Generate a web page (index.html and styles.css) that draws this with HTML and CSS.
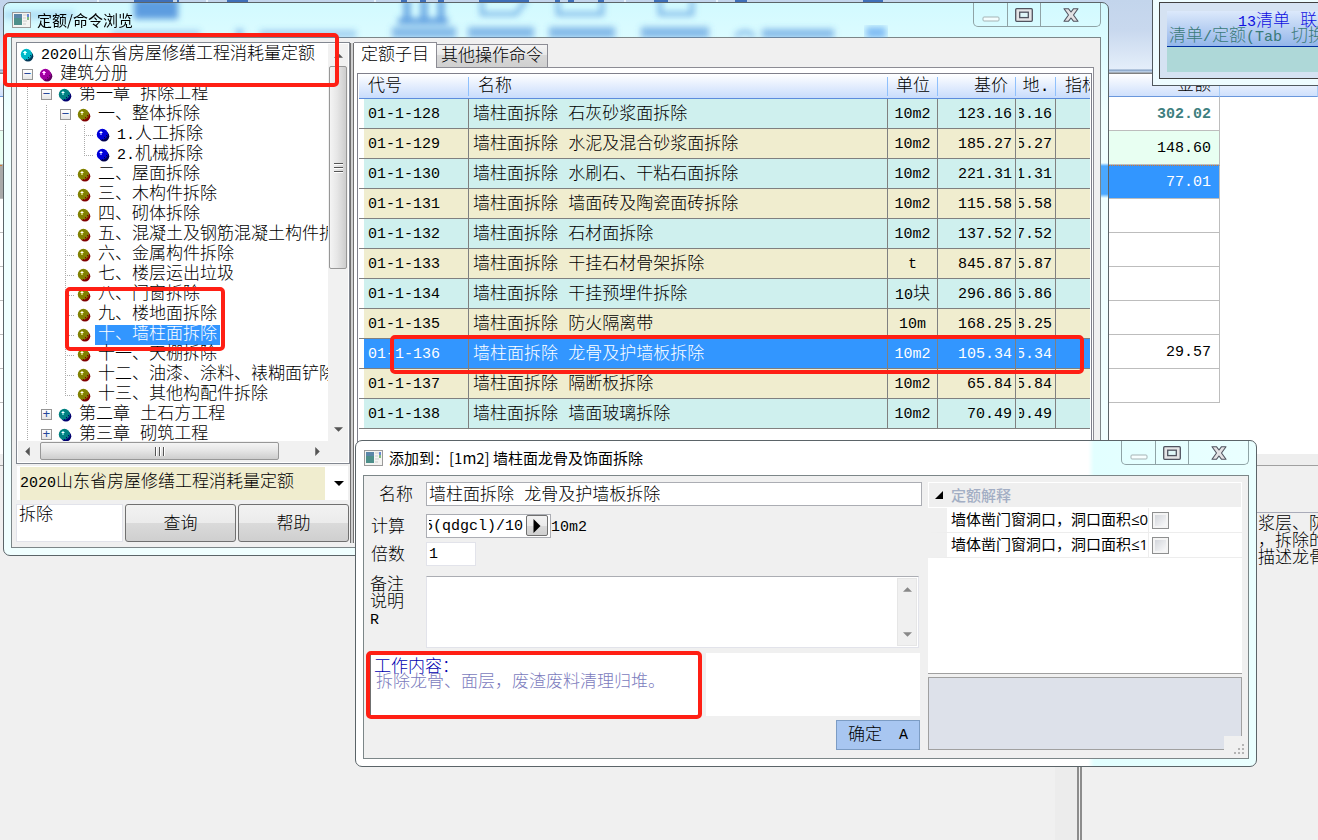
FILE: index.html
```html
<!DOCTYPE html>
<html lang="zh-CN">
<head>
<meta charset="utf-8">
<title>定额/命令浏览</title>
<link rel="stylesheet" href="styles.css">
</head>
<body>
<svg class="defs" aria-hidden="true">
  <symbol id="ball" viewBox="0 0 14 14">
    <circle cx="8" cy="8.2" r="5.3" fill="var(--shade)"/>
    <circle cx="6.4" cy="6.4" r="5.6" fill="currentColor"/>
    <path d="M12 7.5a5.6 5.6 0 0 1-4.8 4.7l1.5-1.7 1.6-.3.4-1.6z" fill="var(--shade)"/>
    <path d="M8 9h1v1H8zM10 7h1v1h-1zM6 11h1v1H6z" fill="var(--shade)"/>
    <path d="M3 4h4v1H3zM4 3h2v4H4z" fill="var(--glow)"/>
    <path d="M4 4h2v1H4z" fill="#fff"/>
  </symbol>
  <symbol id="app" viewBox="0 0 19 16">
    <rect x=".5" y=".5" width="18" height="15" fill="#f4f4f2" stroke="#9a9a9a"/>
    <rect x="2" y="2" width="8" height="11" fill="#4d8f8a"/>
    <rect x="2" y="2" width="8" height="4" fill="#5a86a8"/>
    <path d="M11 3h4M11 6h3M11 9h4M11 12h3" stroke="#ccc"/>
    <path d="M16 2v3" stroke="#3867c8" stroke-width="1.5"/>
    <path d="M16 5v3" stroke="#5aa85a" stroke-width="1.5"/>
  </symbol>
  <symbol id="min" viewBox="0 0 18 6"><rect x="1" y="1" width="16" height="4" rx="1" fill="#fff" fill-opacity=".7" stroke="#a5b3b5"/></symbol>
  <symbol id="max" viewBox="0 0 18 14">
    <rect x=".7" y=".7" width="16.6" height="12.6" rx="1" fill="#e4e4e6" stroke="#50535f" stroke-width="1.3"/>
    <rect x="4.7" y="4.2" width="8.6" height="5.4" fill="#dff6f8" stroke="#50535f" stroke-width="1.3"/>
  </symbol>
  <symbol id="close" viewBox="0 0 16 14">
    <path d="M1 .7h4.4L8 4l2.600-3.300H15L10.500 7 15 13.300h-4.400L8 10l-2.600 3.300H1L5.500 7z" fill="#e2e2e4" stroke="#50535f" stroke-width="1.1" stroke-linejoin="round"/>
  </symbol>
  <symbol id="up" viewBox="0 0 10 5"><path d="M0 5 5 0l5 5z" fill="currentColor"/></symbol>
  <symbol id="down" viewBox="0 0 10 5"><path d="M0 0h10L5 5z" fill="currentColor"/></symbol>
  <symbol id="left" viewBox="0 0 5 10"><path d="M5 0v10L0 5z" fill="currentColor"/></symbol>
  <symbol id="right" viewBox="0 0 5 10"><path d="M0 0v10l5-5z" fill="currentColor"/></symbol>
</svg>

<div class="desktop">
  <main class="back">
    <div class="ribbon">
      <svg width="1318" height="3" aria-hidden="true">
        <g fill="#3f6fb8"><rect x="134" width="39" height="2"/><rect x="177" width="2" height="3"/><rect x="227" width="21" height="2"/><rect x="401" width="6" height="3"/><rect x="420" width="6" height="3"/><rect x="438" width="6" height="3"/><rect x="479" width="50" height="2"/><rect x="555" width="5" height="3"/><rect x="568" width="6" height="3"/><rect x="598" width="6" height="3"/><rect x="654" width="14" height="2"/><rect x="735" width="12" height="2"/><rect x="863" width="20" height="2"/></g>
        <g fill="#e8f2fb"><rect x="97" width="2" height="3"/><rect x="206" width="2" height="3"/><rect x="374" width="2" height="3"/><rect x="624" width="2" height="3"/><rect x="716" width="2" height="3"/></g>
      </svg>
    </div>
    <table class="sum">
      <thead><tr><th class="amt">金额</th><th></th></tr></thead>
      <tbody>
        <tr><td class="total">302.02</td></tr>
        <tr><td class="mint">148.60</td></tr>
        <tr class="on"><td>77.01</td></tr>
        <tr><td></td></tr><tr><td></td></tr><tr><td></td></tr><tr><td></td></tr>
        <tr><td>29.57</td></tr>
        <tr><td></td></tr>
      </tbody>
    </table>
    <div class="lower">
      <div class="split"></div>
      <div class="note"><p>浆层、防</p><p>，拆除的</p><p>描述龙骨</p></div>
    </div>
  </main>

  <aside class="float">
    <div class="float-in">
      <div class="float-head"><p class="f1"><span class="n">13</span>清单 联系</p><p class="f2">清单<span class="n">/</span>定额<span class="n">(Tab </span>切换</p></div>
      <div class="float-body"></div>
    </div>
  </aside>

  <section class="win browse">
    <svg class="haze" width="900" height="35" aria-hidden="true">
      <defs><filter id="b"><feGaussianBlur stdDeviation="3"/></filter></defs>
      <g filter="url(#b)" fill="#3f86d8">
        <rect x="0" y="8" width="70" height="8" opacity=".25"/>
        <rect x="130" y="-4" width="44" height="20" opacity=".8"/>
        <g opacity=".5"><rect x="108" y="27" width="88" height="8" opacity=".6"/><rect x="232" y="26" width="7" height="8"/><rect x="256" y="27" width="96" height="8" opacity=".7"/></g>
        <g opacity=".8"><rect x="400" y="-4" width="6" height="20"/><rect x="417" y="-4" width="6" height="20"/><rect x="434" y="-4" width="6" height="20"/><rect x="394" y="15" width="50" height="6"/></g>
        <g opacity=".55"><rect x="388" y="24" width="64" height="11"/><rect x="464" y="24" width="66" height="11"/><rect x="545" y="24" width="66" height="11"/><rect x="637" y="24" width="68" height="11"/><rect x="758" y="26" width="72" height="9"/></g>
        <g fill="none" stroke="#3f86d8" stroke-width="4" opacity=".6"><path d="M478-4v15h34l10-14M554-4v15h44V-4M656-4v15h32V-4"/><path d="M732 34a10 9 0 0 1 18 0" /></g>
      </g>
      <g filter="url(#b)" fill="#5aa2f0" opacity=".7"><rect x="862" y="24" width="20" height="11"/></g>
    </svg>
    <header class="bar">
      <svg class="logo" width="19" height="16"><use href="#app"/></svg>
      <h1>定额/命令浏览</h1>
      <div class="caps">
        <button aria-label="最小化" disabled><svg width="18" height="6"><use href="#min"/></svg></button>
        <button aria-label="最大化"><svg width="18" height="14"><use href="#max"/></svg></button>
        <button aria-label="关闭"><svg width="16" height="14"><use href="#close"/></svg></button>
      </div>
    </header>
    <div class="client">
      <div class="pane">
        <div class="treebox">
          <div class="treemain">
            <ul class="tree">
              <li><i class="ic"><svg class="cyan"><use href="#ball"/></svg></i><span><span class="n">2020</span>山东省房屋修缮工程消耗量定额</span></li>
              <li><i class="ex">−</i><i class="ic"><svg class="pink"><use href="#ball"/></svg></i><span>建筑分册</span></li>
              <li><i class="g"></i><i class="ex">−</i><i class="ic"><svg class="teal"><use href="#ball"/></svg></i><span>第一章 拆除工程</span></li>
              <li><i class="g"></i><i class="g"></i><i class="ex">−</i><i class="ic"><svg class="olive"><use href="#ball"/></svg></i><span>一、整体拆除</span></li>
              <li><i class="g"></i><i class="g"></i><i class="g"></i><i class="g t"></i><i class="ic"><svg class="blue"><use href="#ball"/></svg></i><span><span class="n">1.</span>人工拆除</span></li>
              <li><i class="g"></i><i class="g"></i><i class="g"></i><i class="g e"></i><i class="ic"><svg class="blue"><use href="#ball"/></svg></i><span><span class="n">2.</span>机械拆除</span></li>
              <li><i class="g"></i><i class="g"></i><i class="g t"></i><i class="ic"><svg class="olive"><use href="#ball"/></svg></i><span>二、屋面拆除</span></li>
              <li><i class="g"></i><i class="g"></i><i class="g t"></i><i class="ic"><svg class="olive"><use href="#ball"/></svg></i><span>三、木构件拆除</span></li>
              <li><i class="g"></i><i class="g"></i><i class="g t"></i><i class="ic"><svg class="olive"><use href="#ball"/></svg></i><span>四、砌体拆除</span></li>
              <li><i class="g"></i><i class="g"></i><i class="g t"></i><i class="ic"><svg class="olive"><use href="#ball"/></svg></i><span>五、混凝土及钢筋混凝土构件拆除</span></li>
              <li><i class="g"></i><i class="g"></i><i class="g t"></i><i class="ic"><svg class="olive"><use href="#ball"/></svg></i><span>六、金属构件拆除</span></li>
              <li><i class="g"></i><i class="g"></i><i class="g t"></i><i class="ic"><svg class="olive"><use href="#ball"/></svg></i><span>七、楼层运出垃圾</span></li>
              <li><i class="g"></i><i class="g"></i><i class="g t"></i><i class="ic"><svg class="olive"><use href="#ball"/></svg></i><span>八、门窗拆除</span></li>
              <li><i class="g"></i><i class="g"></i><i class="g t"></i><i class="ic"><svg class="olive"><use href="#ball"/></svg></i><span>九、楼地面拆除</span></li>
              <li><i class="g"></i><i class="g"></i><i class="g t"></i><i class="ic"><svg class="olive"><use href="#ball"/></svg></i><span class="sel">十、墙柱面拆除</span></li>
              <li><i class="g"></i><i class="g"></i><i class="g t"></i><i class="ic"><svg class="olive"><use href="#ball"/></svg></i><span>十一、天棚拆除</span></li>
              <li><i class="g"></i><i class="g"></i><i class="g t"></i><i class="ic"><svg class="olive"><use href="#ball"/></svg></i><span>十二、油漆、涂料、裱糊面铲除</span></li>
              <li><i class="g"></i><i class="g"></i><i class="g e"></i><i class="ic"><svg class="olive"><use href="#ball"/></svg></i><span>十三、其他构配件拆除</span></li>
              <li><i class="g"></i><i class="ex">+</i><i class="ic"><svg class="teal"><use href="#ball"/></svg></i><span>第二章 土石方工程</span></li>
              <li><i class="g"></i><i class="ex">+</i><i class="ic"><svg class="teal"><use href="#ball"/></svg></i><span>第三章 砌筑工程</span></li>
            </ul>
            <div class="vscroll"><svg width="9" height="5"><use href="#up"/></svg><div class="vthumb"></div><svg width="9" height="5"><use href="#down"/></svg></div>
          </div>
          <div class="hscroll"><svg width="5" height="9"><use href="#left"/></svg><div class="hthumb"></div><svg width="5" height="9"><use href="#right"/></svg></div>
        </div>
        <button class="combo" aria-label="定额库"><span><span class="n">2020</span>山东省房屋修缮工程消耗量定额</span><svg width="10" height="5"><use href="#down"/></svg></button>
        <form class="query" onsubmit="return false">
          <textarea aria-label="查询内容">拆除</textarea>
          <button>查询</button>
          <button>帮助</button>
        </form>
      </div>
      <div class="splitter"></div>
      <div class="work">
        <div class="tabs" role="tablist"><button class="cur" role="tab">定额子目</button><button role="tab">其他操作命令</button><span></span></div>
        <div class="sheet">
          <div class="grid">
            <table>
              <colgroup><col class="c1"><col><col class="c3"><col class="c4"><col class="c5"><col class="c6"></colgroup>
              <thead><tr><th>代号</th><th>名称</th><th class="mid">单位</th><th class="rt">基价</th><th class="mid">地.</th><th>指标</th></tr></thead>
              <tbody>
                <tr><td>01-1-128</td><td>墙柱面拆除 石灰砂浆面拆除</td><td>10m2</td><td>123.16</td><td><div>123.16</div></td><td></td></tr>
                <tr><td>01-1-129</td><td>墙柱面拆除 水泥及混合砂浆面拆除</td><td>10m2</td><td>185.27</td><td><div>185.27</div></td><td></td></tr>
                <tr><td>01-1-130</td><td>墙柱面拆除 水刷石、干粘石面拆除</td><td>10m2</td><td>221.31</td><td><div>221.31</div></td><td></td></tr>
                <tr><td>01-1-131</td><td>墙柱面拆除 墙面砖及陶瓷面砖拆除</td><td>10m2</td><td>115.58</td><td><div>115.58</div></td><td></td></tr>
                <tr><td>01-1-132</td><td>墙柱面拆除 石材面拆除</td><td>10m2</td><td>137.52</td><td><div>137.52</div></td><td></td></tr>
                <tr><td>01-1-133</td><td>墙柱面拆除 干挂石材骨架拆除</td><td>t</td><td>845.87</td><td><div>845.87</div></td><td></td></tr>
                <tr><td>01-1-134</td><td>墙柱面拆除 干挂预埋件拆除</td><td>10<span class="z">块</span></td><td>296.86</td><td><div>296.86</div></td><td></td></tr>
                <tr><td>01-1-135</td><td>墙柱面拆除 防火隔离带</td><td>10m</td><td>168.25</td><td><div>168.25</div></td><td></td></tr>
                <tr class="on"><td>01-1-136</td><td>墙柱面拆除 龙骨及护墙板拆除</td><td>10m2</td><td>105.34</td><td><div>105.34</div></td><td></td></tr>
                <tr><td>01-1-137</td><td>墙柱面拆除 隔断板拆除</td><td>10m2</td><td>65.84</td><td><div>65.84</div></td><td></td></tr>
                <tr><td>01-1-138</td><td>墙柱面拆除 墙面玻璃拆除</td><td>10m2</td><td>70.49</td><td><div>70.49</div></td><td></td></tr>
              </tbody>
            </table>
          </div>
        </div>
      </div>
    </div>
  </section>

  <section class="win dialog">
    <header class="bar">
      <svg class="logo" width="19" height="16"><use href="#app"/></svg>
      <h2>添加到：[1m2] 墙柱面龙骨及饰面拆除</h2>
      <div class="caps">
        <button aria-label="最小化" disabled><svg width="18" height="6"><use href="#min"/></svg></button>
        <button aria-label="最大化"><svg width="18" height="14"><use href="#max"/></svg></button>
        <button aria-label="关闭"><svg width="16" height="14"><use href="#close"/></svg></button>
      </div>
    </header>
    <form class="client" onsubmit="return false">
      <div class="fields">
        <div class="row first"><label for="nm">名称</label><input id="nm" type="text" value="墙柱面拆除 龙骨及护墙板拆除"></div>
        <div class="row"><label for="calc">计算</label><div class="calc"><div class="clip"><input id="calc" type="text" value="5(qdgcl)/10"></div><button class="go" aria-label="展开"><svg width="8" height="14" viewBox="0 0 5 10"><path d="M0 0v10l5-5z"/></svg></button></div><span class="n unit">10m2</span></div>
        <div class="row tight"><label for="mul">倍数</label><input id="mul" class="short" type="text" value="1"></div>
        <div class="row memo"><label for="mm">备注<br>说明<br><span class="n">R</span></label><div class="area"><textarea id="mm"></textarea><div class="vs"><svg width="9" height="5"><use href="#up"/></svg><svg width="9" height="5"><use href="#down"/></svg></div></div></div>
        <div class="info"><div class="job"><p class="j1">工作内容：</p><p class="j2">拆除龙骨、面层，废渣废料清理归堆。</p></div><div class="blank"></div></div>
        <button class="ok"><span>确定</span><span class="n">A</span></button>
      </div>
      <div class="props">
        <div class="plist">
          <div class="phead"><svg width="8" height="8"><path d="M8 0v8H0z"/></svg><b>定额解释</b></div>
          <div class="prow"><label for="k1">墙体凿门窗洞口，洞口面积≤0.5</label><div><input id="k1" type="checkbox"></div></div>
          <div class="prow"><label for="k2">墙体凿门窗洞口，洞口面积≤1.0</label><div><input id="k2" type="checkbox"></div></div>
        </div>
        <div class="phelp"></div>
      </div>
      <svg class="grip" width="24" height="20"><g fill="#b4b4b4"><path d="M18 8h2v2h-2zM14 12h2v2h-2zM18 12h2v2h-2zM10 16h2v2h-2zM14 16h2v2h-2zM18 16h2v2h-2z"/></g></svg>
    </form>
  </section>

  <div class="mark m1"></div>
  <div class="mark m2"></div>
  <div class="mark m3"></div>
  <div class="mark m4"></div>
</div>
</body>
</html>
```
FILE: styles.css
```css
* { box-sizing: border-box; }
body, p, ul, h1, h2 { margin: 0; padding: 0; }
body {
  font: 300 17px/20px "Liberation Mono", "Noto Sans CJK SC", monospace;
  color: #000;
  background: #f0f0f0;
  overflow: hidden;
}
button, input, textarea { font: inherit; color: inherit; margin: 0; border-radius: 0; }
button { padding: 0; border: 0; background: none; }
.defs { position: absolute; width: 0; height: 0; }
.n { font-size: 15px; }
.z { font-size: 17px; }
.desktop { position: relative; height: 100vh; overflow: hidden; }

/* application behind the windows */
.back { display: flex; flex-direction: column; height: 100%; background: #fff; }
.ribbon { flex: none; height: 74px; background: linear-gradient(#c3d5ec, #c8d8ee 40%, #e4eefa 69px, #7d9abf 70px, #c9dcf0 72px, #808080 73px); }
.ribbon svg { display: block; }
.sum { flex: none; width: 100%; border-spacing: 0; table-layout: fixed; }
.sum th { height: 23px; padding: 2px 8px 0 0; font-weight: 300; text-align: right; line-height: 20px; background: linear-gradient(#fff, #cfe0fc); border-bottom: 1px solid #6a97dc; border-right: 1px solid #a8cdf8; }
.sum .amt { width: 1220px; }
.sum td { height: 34px; padding: 2px 8px 0 0; text-align: right; font-size: 15px; border: 0 solid #bdbdbd; border-width: 0 1px 1px 0; }
.sum .total { color: #3f7f7f; font-weight: 700; }
.sum .mint { background: #e8fff2; }
.sum .on td { color: #fff; background: linear-gradient(90deg, #a9a9a9 4px, #3296ff 4px); border-top: 1px dotted #d07830; }
.lower { flex: 1; margin-top: 51px; display: flex; background: #f0f0f0; border-top: 11px solid #eee; box-shadow: inset 0 1px #a0a0a0; }
.split { flex: none; width: 1082px; margin-top: 48px; border-right: 5px double #8c8c8c; box-shadow: inset -22px 0 #ececec; }
.note { flex: 1; margin-top: 47px; padding: 3px 0 0 176px; border-top: 1px solid #a9abb8; white-space: nowrap; line-height: 17px; }

/* floating panel */
.float { position: absolute; left: 1152px; right: -20px; top: -8px; height: 94px; padding: 9px 0 6px 6px; background: #eefcff; border: 1px solid #50585e; }
.float-in { height: 100%; padding: 8px 0 7px 7px; background: #d5e2f2; border: 1px solid #404040; }
.float-head { height: 36px; padding: 1px 0 0 2px; background: linear-gradient(#dce9fb, #94b6ea); border-bottom: 1px solid #0030a0; white-space: nowrap; line-height: 20px; }
.f1 { color: #0f0fe0; padding-left: 69px; height: 15px; }
.f2 { color: #3a7a78; }
.float-body { height: 25px; background: #aed8d8; }

/* window chrome */
.win { position: absolute; display: flex; flex-direction: column; padding: 0 7px 7px; border: 1px solid #5b6468; border-radius: 7px; background: #eaffff; overflow: hidden; }
.browse { left: 3px; top: 2px; width: 1106px; height: 554px; background: linear-gradient(transparent, #4aa8ff 3px, #4aa8ff 31px, transparent) right 160px / 7px 35px no-repeat, linear-gradient(#d2faff, #defcff 8%, #f0ffff 20%); }
.dialog { left: 355px; top: 440px; width: 902px; height: 327px; background: linear-gradient(90deg, #fff 0, #fff 732px, #e2ffff 738px, #eaffff 100%); }
.haze { position: absolute; left: 0; top: 0; }
.bar { position: relative; flex: none; height: 34px; display: flex; align-items: flex-start; padding: 0 0 0 1px; }
.bar .logo { margin-top: 9px; }
.bar h1, .bar h2 { flex: 1; margin: 7px 0 0 6px; font: 400 15px/20px "Noto Sans CJK SC", sans-serif; }
.caps { display: flex; height: 24px; border: 1px solid #8fa3a6; border-top: 0; border-radius: 0 0 5px 5px; }
.caps button { width: 34px; display: flex; align-items: center; justify-content: center; border-right: 1px solid #8fa3a6; }
.caps button:nth-child(2) { width: 33px; }
.caps button:first-child { align-items: flex-end; padding-bottom: 4px; }
.caps button:last-child { width: 59px; border: 0; }
.client { flex: 1; min-height: 0; display: flex; background: #f0f0f0; border: 1px solid #7c8688; }

/* left pane */
.pane { flex: none; width: 338px; padding: 4px 0 5px 4px; display: flex; flex-direction: column; }
.treebox { flex: 1; min-height: 0; display: flex; flex-direction: column; border: 1px solid #828790; background: #fff; padding: 1px; }
.treemain { flex: 1; min-height: 0; display: flex; }
.tree { flex: 1; min-width: 0; padding-top: 1px; overflow: hidden; list-style: none; }
.tree li { display: flex; height: 20px; line-height: 20px; white-space: nowrap; }
.tree i { flex: none; width: 19px; height: 20px; display: flex; align-items: center; justify-content: center; }
.tree .g { background: repeating-linear-gradient(#aaa 0 1px, transparent 1px 2px) 9px 0 / 1px 100% no-repeat; }
.tree .t { background: repeating-linear-gradient(#aaa 0 1px, transparent 1px 2px) 9px 0 / 1px 100% no-repeat, repeating-linear-gradient(90deg, #aaa 0 1px, transparent 1px 2px) 9px 10px / 10px 1px no-repeat; }
.tree .e { background: repeating-linear-gradient(#aaa 0 1px, transparent 1px 2px) 9px 0 / 1px 10px no-repeat, repeating-linear-gradient(90deg, #aaa 0 1px, transparent 1px 2px) 9px 10px / 10px 1px no-repeat; }
.tree .ex { width: 11px; height: 11px; margin: 4px; font: 400 13px/11px "Liberation Mono", monospace; color: #24489c; border: 1px solid #959595; background: linear-gradient(#fff, #e6e6e6); }
.tree .ic { padding: 0 1px 1px 0; }
.tree svg { width: 14px; height: 14px; }
.tree li > span { padding: 0 3px; margin-left: 1px; }
.tree .sel { color: #fff; background: #3296ff; }
.cyan { color: #00b8c8; --shade: #003858; --glow: #a0ffff; }
.pink { color: #a000a0; --shade: #600060; --glow: #ff90ff; }
.teal { color: #008080; --shade: #000070; --glow: #60c8c8; }
.olive { color: #808000; --shade: #800000; --glow: #c8c860; }
.blue { color: #0000d8; --shade: #000050; --glow: #7070ff; }
.vscroll, .hscroll { display: flex; align-items: center; background: #f1f1f1; color: #555; }
.vscroll { flex: none; width: 20px; flex-direction: column; padding: 9px 0 9px; }
.vthumb { width: 18px; height: 203px; margin: 8px 0 auto; border: 1px solid #979797; border-radius: 2px; background: repeating-linear-gradient(#555 0 1px, #fff 1px 2px, transparent 2px 4px) center 96px / 9px 10px no-repeat, linear-gradient(90deg, #f4f4f4, #e6e6e6 45%, #cdcdcd); }
.hscroll { flex: none; height: 21px; padding: 0 28px 1px 7px; }
.hthumb { width: 239px; height: 18px; margin: 0 auto 0 10px; border: 1px solid #979797; border-radius: 2px; background: repeating-linear-gradient(90deg, #555 0 1px, #fff 1px 2px, transparent 2px 4px) center / 10px 9px no-repeat, linear-gradient(#f4f4f4, #e6e6e6 45%, #cdcdcd); }
.combo { flex: none; height: 34px; margin: 2px 2px 4px 1px; display: flex; align-items: center; background: #fff; text-align: left; border: 1px solid #fff; border-left-width: 3px; }
.combo > span { flex: 1; margin-right: 9px; line-height: 32px; background: #f0edcf; white-space: nowrap; }
.combo svg { margin-right: 3px; }
.query { flex: none; display: flex; gap: 2px; height: 38px; padding-right: 1px; }
.query textarea { flex: none; width: 107px; height: 38px; padding: 1px 2px; line-height: 20px; border: 1px solid #e2e3ea; resize: none; background: #fff; outline: 0; overflow: hidden; }
.query button { flex: 1; padding-top: 3px; border: 1px solid #707070; border-radius: 3px; background: linear-gradient(#f2f2f2, #ebebeb 50%, #dadada 51%, #cfcfcf); }
.splitter { flex: none; width: 4px; margin: 5px 0 4px; border: 1px solid #706f6f; border-width: 0 1px; background: #d0d0d0; }

/* right pane */
.work { flex: 1; min-width: 0; margin: 4px 6px 5px 0; display: flex; flex-direction: column; }
.tabs { flex: none; display: flex; height: 26px; }
.tabs span { flex: 1; border-bottom: 1px solid #8c8c94; }
.tabs button { padding: 2px 4px 0; border: 1px solid #8c8c94; margin-top: 2px; background: linear-gradient(#f4f4f4, #e8e8e8 45%, #d8d8d8 46%, #d0d0d0); border-left: 0; }
.tabs .cur { width: 83px; padding: 0; margin: 0; border-bottom: 0; background: #fff; }
.sheet { flex: 1; min-height: 0; padding: 5px 1px 0 3px; background: #fff; border-right: 1px solid #8c8c94; }
.grid { height: 100%; padding: 0 1px; border: 1px solid #7f7f8a; overflow: hidden; background: #fff; }
.grid table { width: 100%; table-layout: fixed; border-spacing: 0; white-space: nowrap; }
.c1 { width: 110px; } .c3 { width: 50px; } .c4 { width: 78px; } .c5 { width: 40px; } .c6 { width: 34px; }
.grid th { height: 25px; padding: 2px 0 0 9px; font-weight: 300; text-align: left; overflow: hidden; line-height: 22px; border-bottom: 1px solid #5c8cdc; background: linear-gradient(#8fc0fc, #8fc0fc) right 3px / 1px 19px no-repeat, linear-gradient(#fff, #c8dcfc); }
.grid th:last-child { background: linear-gradient(#fff, #c8dcfc); }
.grid th.mid { padding: 2px 0 0; text-align: center; }
.grid th.rt { padding: 2px 8px 0 0; text-align: right; }
.grid td { height: 30px; padding: 3px 0 0 4px; background: #cff0ee; border: 0 solid #808080; border-width: 0 1px 1px 0; font-size: 15px; overflow: hidden; line-height: 20px; }
.grid td:first-child { padding-left: 9px; box-shadow: inset 5px 0 #fff; }
.grid td:nth-child(2) { font-size: 17px; }
.grid td:nth-child(3) { padding-left: 0; text-align: center; }
.grid td:nth-child(4) { padding-right: 3px; text-align: right; }
.grid td:nth-child(5) { padding-left: 3px; padding-right: 3px; }
.grid td:last-child { border-right: 0; }
.grid td div { display: flex; justify-content: flex-end; overflow: hidden; }
.grid tbody tr:nth-child(even) td { background-color: #f0edcf; }
.grid tbody tr.on td { color: #fff; background-color: #3296ff; }

/* dialog */
.dialog .client { padding: 6px 6px 8px 5px; gap: 6px; position: relative; }
.fields { flex: 1; min-width: 0; display: flex; flex-direction: column; }
.row { display: flex; align-items: center; height: 24px; margin-bottom: 8px; }
.row label { flex: none; width: 57px; padding: 4px 0 0 2px; }
.row.first label { padding-left: 10px; }
.row input { height: 24px; border: 1px solid #abadb3; background: #fff; padding: 0 2px; outline: 0; }
.row.first input { flex: 1; min-width: 0; padding-bottom: 3px; }
.row.tight { margin: -4px 0 10px; }
.row .short { width: 50px; border-color: #e2e3ea; font-size: 15px; }
.unit { padding-top: 4px; }
.calc { width: 125px; height: 24px; display: flex; padding: 0 2px; border: 1px solid #abadb3; background: #fff; }
.clip { flex: 1; min-width: 0; display: flex; justify-content: flex-end; overflow: hidden; }
.row .clip input { flex: none; width: 99px; height: 22px; padding: 0; border: 0; font-size: 15px; }
.go { flex: none; width: 22px; height: 21px; margin-left: 3px; border: 1px solid #707070; border-radius: 2px; background: linear-gradient(#f2f2f2, #ebebeb 50%, #dadada 51%, #cfcfcf); display: flex; align-items: center; justify-content: center; }
.row.memo { height: 72px; align-items: flex-start; margin-bottom: 5px; padding-right: 3px; }
.memo label { line-height: 17px; padding: 1px 0 0 1px; }
.area { flex: 1; display: flex; height: 72px; border: 1px solid #e2e3ea; border-top-color: #abadb3; background: #fff; padding: 1px; }
.area textarea { flex: 1; min-width: 0; border: 0; resize: none; outline: 0; }
.vs { width: 20px; display: flex; flex-direction: column; align-items: center; justify-content: space-between; padding: 8px 0; background: #f0f0f0; color: #888; border: 1px solid #e6e6e6; }
.info { display: flex; gap: 6px; height: 63px; margin-right: 2px; }
.job { flex: none; width: 331px; padding: 4px 0 0 3px; background: #fff; border: 1px solid #707070; border-width: 1px 0 0 2px; line-height: 20px; }
.blank { flex: 1; background: #fff; }
.j1 { color: #0000b0; height: 15px; }
.j2 { color: #7b7bbd; padding-left: 2px; }
.ok { align-self: flex-end; width: 84px; height: 30px; margin: 4px 2px 0 0; display: flex; align-items: center; justify-content: space-between; padding: 2px 11px 0; background: #a8c6f1; border: 1px solid #7c9cc4; }
.props { flex: none; width: 314px; display: flex; flex-direction: column; font: 400 15px/22px "Open Sans", "Noto Sans CJK SC", sans-serif; }
.plist { flex: 1; background: #fff; border-bottom: 1px solid #a0a0a0; }
.phead { display: flex; align-items: center; height: 26px; padding-left: 6px; background: #efefef; border: 1px solid #fff; color: #a3aec4; gap: 8px; }
.phead b { font-weight: 500; }
.prow { display: flex; height: 25px; border-left: 19px solid #f0f0f0; border-bottom: 1px solid #ededed; }
.prow label { flex: none; width: 202px; margin-right: 3px; padding-left: 4px; overflow: hidden; white-space: nowrap; border-right: 1px solid #ededed; }
.prow input { appearance: none; display: block; width: 17px; height: 17px; margin: 4px 0 0; border: 1px solid #8e8f8f; background: linear-gradient(135deg, #cdd0d6, #fff); box-shadow: inset 0 0 0 2px #f4f4f4; }
.phelp { flex: none; height: 73px; margin-top: 3px; background: #dde1ea; border: 1px solid #a0a0a0; }
.grip { position: absolute; right: 0; bottom: 2px; background: #f0f0f0; }

/* annotation frames */
.mark { position: absolute; border: 4px solid #ff1f14; border-radius: 5px; }
.m1 { left: 3px; top: 33px; width: 336px; height: 54px; }
.m2 { left: 65px; top: 287px; width: 160px; height: 64px; }
.m3 { left: 390px; top: 335px; width: 694px; height: 39px; }
.m4 { left: 366px; top: 651px; width: 336px; height: 68px; }
```
